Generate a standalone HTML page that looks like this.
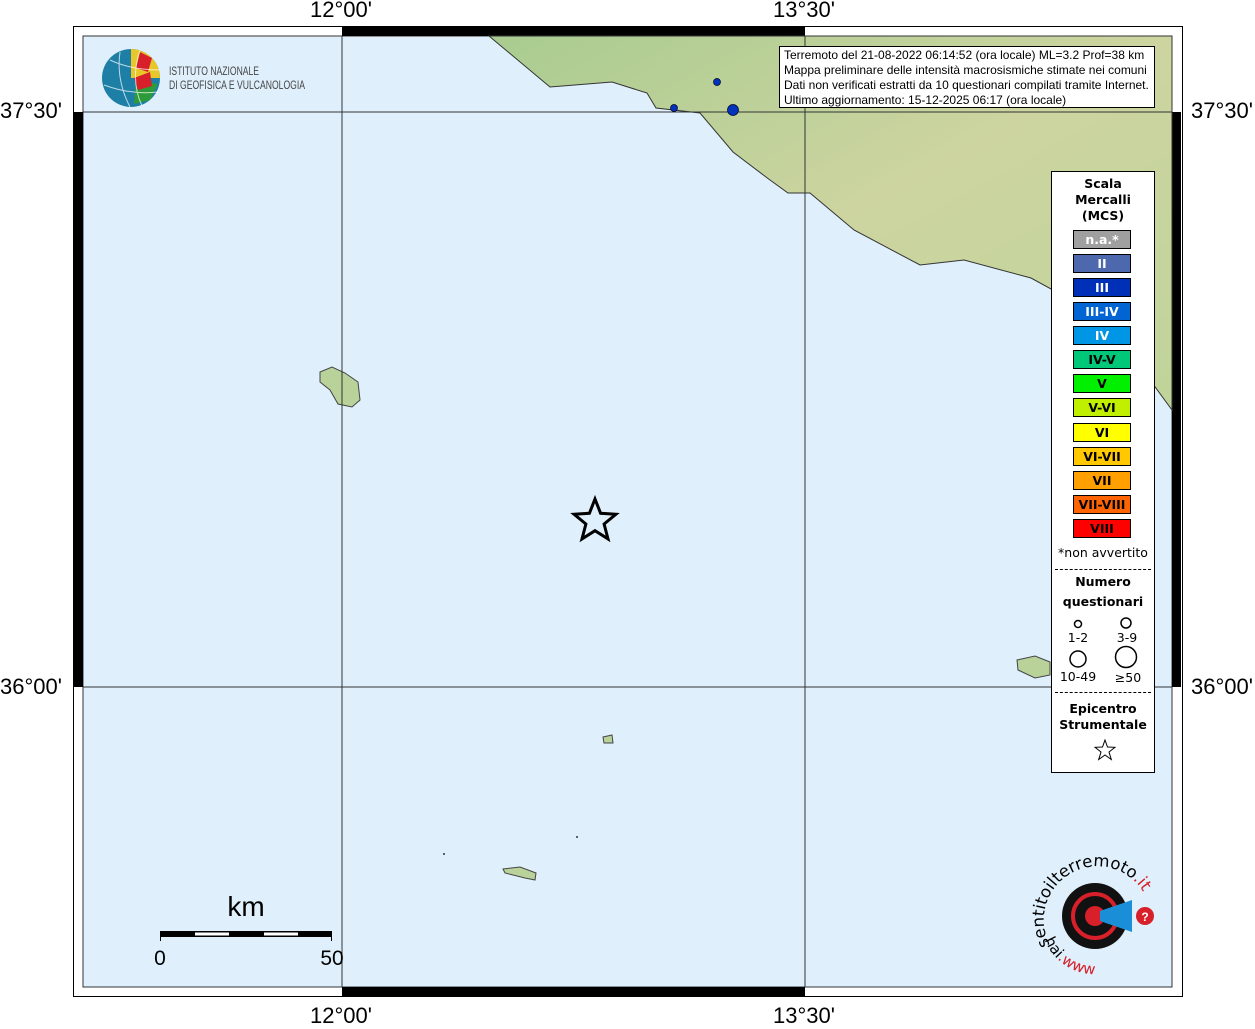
<!DOCTYPE html>
<html><head><meta charset="utf-8"><style>
body{margin:0;width:1255px;height:1024px;background:#fff;position:relative;overflow:hidden;font-family:"Liberation Sans",sans-serif}
.a{position:absolute}
.lab{position:absolute;font-size:22px;color:#000}
.leg{position:absolute;left:1051px;top:171px;width:102px;height:600px;background:#fff;border:1px solid #000;font-family:"DejaVu Sans",sans-serif;text-align:center}
.sw{position:absolute;left:21px;width:56px;height:17px;border:1px solid #000;font-weight:bold;font-size:12.5px;line-height:17px}
</style></head><body>
<svg class="a" style="left:0;top:0" width="1255" height="1024">
<rect x="73.5" y="26.5" width="1109" height="970" fill="#fff" stroke="#000"/>
<rect x="83" y="36" width="1089" height="951" fill="#dff0fc" stroke="#333"/>
<rect x="342" y="27" width="463" height="9" fill="#000"/>
<rect x="342" y="987" width="463" height="9" fill="#000"/>
<rect x="74" y="112" width="9" height="575" fill="#000"/>
<rect x="1172" y="112" width="9" height="575" fill="#000"/>
<defs><linearGradient id="land" x1="0" y1="0" x2="1" y2="1"><stop offset="0" stop-color="#a9cc90"/><stop offset="0.5" stop-color="#cdd4a0"/><stop offset="1" stop-color="#bfd49a"/></linearGradient></defs>
<path d="M489,36 L550,87 L612,82 L647,93 L656,108 L700,113 L733,152 L770,180 L788,193 L810,193 L854,230 L920,265 L964,260 L1031,278 L1053,290 L1080,310 L1110,340 L1150,380 L1172,410 L1172,36 Z" fill="url(#land)" stroke="#333" stroke-width="1"/>
<path d="M320,372 L332,367 L345,373 L358,382 L360,400 L352,407 L338,404 L330,390 L320,382 Z" fill="#b9d29a" stroke="#444"/>
<path d="M1017,660 L1035,656 L1050,662 L1050,675 L1035,678 L1018,670 Z" fill="#b9d29a" stroke="#444"/>
<path d="M603,737 L612,735 L613,743 L604,743 Z" fill="#b9d29a" stroke="#444"/>
<path d="M503,869 L520,867 L536,873 L535,880 L525,878 L505,873 Z" fill="#b9d29a" stroke="#444"/>
<circle cx="577" cy="837" r="1" fill="#333"/><circle cx="444" cy="854" r="1" fill="#333"/>
<line x1="342" y1="36" x2="342" y2="987" stroke="#333"/>
<line x1="805" y1="36" x2="805" y2="987" stroke="#333"/>
<line x1="83" y1="112" x2="1172" y2="112" stroke="#333"/>
<line x1="83" y1="687" x2="1172" y2="687" stroke="#333"/>
<circle cx="717" cy="82" r="3.5" fill="#0033bb" stroke="#002" stroke-width="0.7"/>
<circle cx="674" cy="108" r="3.5" fill="#0033bb" stroke="#002" stroke-width="0.7"/>
<circle cx="733" cy="110" r="5.5" fill="#0033bb" stroke="#002" stroke-width="0.7"/>
<polygon points="595,499 600.6,513.3 615.9,514.3 604.1,524 608,538.9 595,530.7 582,538.9 585.9,524 574.1,514.3 589.4,513.3" fill="none" stroke="#000" stroke-width="3"/>
<rect x="160" y="931" width="172" height="6" fill="#000"/>
<rect x="195" y="932.5" width="34" height="3" fill="#fff"/>
<rect x="264" y="932.5" width="34" height="3" fill="#fff"/>
<line x1="160.5" y1="931" x2="160.5" y2="941" stroke="#000"/><line x1="331.5" y1="931" x2="331.5" y2="941" stroke="#000"/>
<text x="246" y="916" font-size="28" text-anchor="middle" font-family="Liberation Sans">km</text>
<text x="160" y="965" font-size="21" text-anchor="middle" font-family="Liberation Sans">0</text>
<text x="332" y="965" font-size="21" text-anchor="middle" font-family="Liberation Sans">50</text>
<circle cx="131" cy="78" r="29" fill="#1e7fa6"/>
<path d="M131,49 A29,29 0 0 1 160,78 L131,78 Z" fill="#e8c72a"/>
<path d="M140,52 L152,58 L148,72 L136,68 Z" fill="#d8202a"/>
<path d="M136,80 L158,84 L150,100 L134,104 Z" fill="#2e9b3a"/>
<path d="M134,78 L150,72 L152,86 L138,90 Z" fill="#d8202a"/>
<path d="M110,60 Q131,70 160,70 M104,85 Q131,95 158,92 M120,52 Q116,80 130,107 M140,50 Q130,80 142,106" fill="none" stroke="#fff" stroke-width="1" opacity="0.7"/>
<text x="169" y="75" font-size="11.5" fill="#444" font-family="Liberation Sans" textLength="90" lengthAdjust="spacingAndGlyphs">ISTITUTO NAZIONALE</text>
<text x="169" y="89" font-size="11.5" fill="#444" font-family="Liberation Sans" textLength="136" lengthAdjust="spacingAndGlyphs">DI GEOFISICA E VULCANOLOGIA</text>
<circle cx="1095" cy="916" r="33" fill="#111"/>
<circle cx="1095" cy="916" r="22" fill="none" stroke="#d8202a" stroke-width="4"/>
<circle cx="1095" cy="916" r="10" fill="#d8202a"/>
<path d="M1100,911 L1132,900 L1132,932 L1100,921 Z" fill="#1a8fd8"/>
<circle cx="1145" cy="916" r="9" fill="#d8202a"/>
<text x="1145" y="921" font-size="12" fill="#fff" text-anchor="middle" font-weight="bold">?</text>
<path id="arc" d="M1050,945 A50,50 0 1 1 1145,895" fill="none"/>
<text font-size="16.5" font-family="DejaVu Sans"><textPath href="#arc">sentitoilterremoto<tspan fill="#d8202a">.it</tspan></textPath></text>
<path id="arc2" d="M1044,938 A54,54 0 0 0 1146,938" fill="none"/>
<text font-size="15" font-family="DejaVu Sans" fill="#d8202a"><textPath href="#arc2" startOffset="2"><tspan fill="#000">hai</tspan>.www</textPath></text>
</svg>
<div class="lab" style="left:310px;top:-3px">12°00'</div>
<div class="lab" style="left:773px;top:-3px">13°30'</div>
<div class="lab" style="left:310px;top:1003px">12°00'</div>
<div class="lab" style="left:773px;top:1003px">13°30'</div>
<div class="lab" style="left:0px;top:98px">37°30'</div>
<div class="lab" style="left:1191px;top:98px">37°30'</div>
<div class="lab" style="left:0px;top:674px">36°00'</div>
<div class="lab" style="left:1191px;top:674px">36°00'</div>
<div class="a" style="left:779px;top:46px;width:376px;height:62px;background:#fff;border:1px solid #000;font-size:12px;line-height:15px;padding:1px 0 0 4px;box-sizing:border-box;white-space:nowrap;overflow:hidden">Terremoto del 21-08-2022 06:14:52 (ora locale) ML=3.2 Prof=38 km<br>Mappa preliminare delle intensità macrosismiche stimate nei comuni<br>Dati non verificati estratti da 10 questionari compilati tramite Internet.<br>Ultimo aggiornamento: 15-12-2025 06:17 (ora locale)</div>
<div class="leg">
<div style="position:absolute;top:4px;width:100%;font-weight:bold;font-size:12.5px;line-height:16px">Scala<br>Mercalli<br>(MCS)</div>
<div class="sw" style="top:58px;background:#a0a0a0;color:#fff">n.a.*</div>
<div class="sw" style="top:82px;background:#4e68ad;color:#fff">II</div>
<div class="sw" style="top:106px;background:#0030b8;color:#fff">III</div>
<div class="sw" style="top:130px;background:#0064d2;color:#fff">III-IV</div>
<div class="sw" style="top:154px;background:#0096e6;color:#fff">IV</div>
<div class="sw" style="top:178px;background:#00c878">IV-V</div>
<div class="sw" style="top:202px;background:#00f000">V</div>
<div class="sw" style="top:226px;background:#c0f000">V-VI</div>
<div class="sw" style="top:251px;background:#ffff00">VI</div>
<div class="sw" style="top:275px;background:#ffc800">VI-VII</div>
<div class="sw" style="top:299px;background:#ffa000">VII</div>
<div class="sw" style="top:323px;background:#ff6400">VII-VIII</div>
<div class="sw" style="top:347px;background:#ff0000">VIII</div>
<div style="position:absolute;top:373px;width:100%;font-size:12.5px">*non avvertito</div>
<div style="position:absolute;top:397px;left:3px;right:3px;border-top:1px dashed #000"></div>
<div style="position:absolute;top:400px;width:100%;font-weight:bold;font-size:12.5px;line-height:20px">Numero<br>questionari</div>
<svg style="position:absolute;left:0;top:440px" width="102" height="75">
<circle cx="26" cy="12" r="3.5" fill="none" stroke="#000" stroke-width="1.5"/>
<circle cx="74" cy="11" r="5" fill="none" stroke="#000" stroke-width="1.5"/>
<circle cx="26" cy="47" r="8" fill="none" stroke="#000" stroke-width="1.5"/>
<circle cx="74" cy="45" r="10.5" fill="none" stroke="#000" stroke-width="1.5"/>
<text x="26" y="30" font-size="12.5" text-anchor="middle" font-family="DejaVu Sans">1-2</text>
<text x="75" y="30" font-size="12.5" text-anchor="middle" font-family="DejaVu Sans">3-9</text>
<text x="26" y="69" font-size="12.5" text-anchor="middle" font-family="DejaVu Sans">10-49</text>
<text x="76" y="70" font-size="12.5" text-anchor="middle" font-family="DejaVu Sans">≥50</text>
</svg>
<div style="position:absolute;top:520px;left:3px;right:3px;border-top:1px dashed #000"></div>
<div style="position:absolute;top:529px;width:100%;font-weight:bold;font-size:12.5px;line-height:16px">Epicentro<br>Strumentale</div>
<svg style="position:absolute;left:42px;top:567px" width="22" height="22"><polygon points="11,1 13.5,8 21,8.3 15,13 17.3,20.5 11,16 4.7,20.5 7,13 1,8.3 8.5,8" fill="none" stroke="#000"/></svg>
</div>
</body></html>
